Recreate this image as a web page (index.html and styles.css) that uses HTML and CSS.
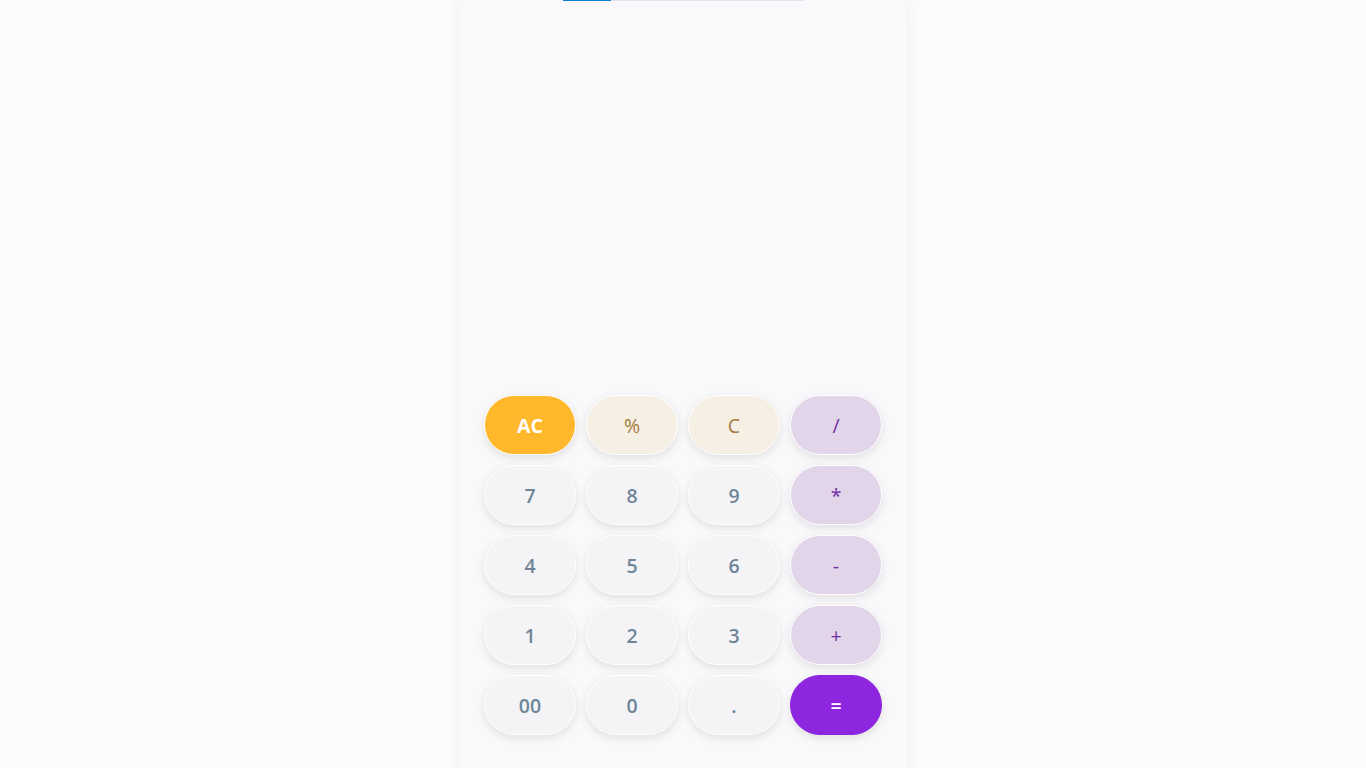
FILE: index.html
```html
<!DOCTYPE html>
<html lang="en">
<head>
<meta charset="utf-8">
<title>Calculator</title>
<link rel="stylesheet" href="styles.css">
</head>
<body>
<main class="calc">
  <div class="display">
    <div class="progress"><div class="progress-fill"></div></div>
  </div>
  <div class="keys">
    <button class="key key-ac">AC</button>
    <button class="key key-fn">%</button>
    <button class="key key-fn">C</button>
    <button class="key key-op">/</button>
    <button class="key">7</button>
    <button class="key">8</button>
    <button class="key">9</button>
    <button class="key key-op">*</button>
    <button class="key">4</button>
    <button class="key">5</button>
    <button class="key">6</button>
    <button class="key key-op">-</button>
    <button class="key">1</button>
    <button class="key">2</button>
    <button class="key">3</button>
    <button class="key key-op">+</button>
    <button class="key">00</button>
    <button class="key">0</button>
    <button class="key">.</button>
    <button class="key key-eq">=</button>
  </div>
</main>
</body>
</html>
```
FILE: styles.css
```css
html, body {
  margin: 0;
  padding: 0;
  height: 100%;
  overflow: hidden;
}
body {
  background: #fcfcfd;
  font-family: "Open Sans", "Noto Sans", sans-serif;
}
.calc {
  width: 448px;
  margin: 0 auto;
  box-sizing: border-box;
  padding: 0 25px 40px;
  min-height: 800px;
  background: #f9f9fb;
  box-shadow: 0 0 18px rgba(0, 0, 0, 0.06);
  display: flex;
  flex-direction: column;
}
.display {
  height: 395px;
}
.progress {
  margin-left: 79px;
  width: 241px;
  height: 1px;
  background: #e3e5ea;
}
.progress-fill {
  width: 48px;
  height: 100%;
  background: #0a7fd9;
}
.keys {
  display: grid;
  grid-template-columns: repeat(4, 92px);
  grid-auto-rows: 60px;
  column-gap: 10px;
  row-gap: 10px;
}
.key {
  border: 1px solid #ffffff;
  border-radius: 30px;
  background: #f4f4f7;
  color: #6e8698;
  font-family: "Open Sans", "Noto Sans", sans-serif;
  font-size: 19.5px;
  font-weight: 600;
  box-shadow: 0 3px 9px rgba(0, 0, 0, 0.1);
  padding: 0;
  cursor: pointer;
}
.key-ac {
  background: #ffb82c;
  color: #ffffff;
  font-weight: 700;
}
.key-fn {
  background: #f5efe4;
  color: #a47b3c;
  font-weight: 500;
}
.key-op {
  background: #e2d5ea;
  color: #6f2ea3;
  font-weight: 500;
}
.key-eq {
  background: #8d26de;
  color: #ffffff;
  border-color: #8d26de;
}
```
